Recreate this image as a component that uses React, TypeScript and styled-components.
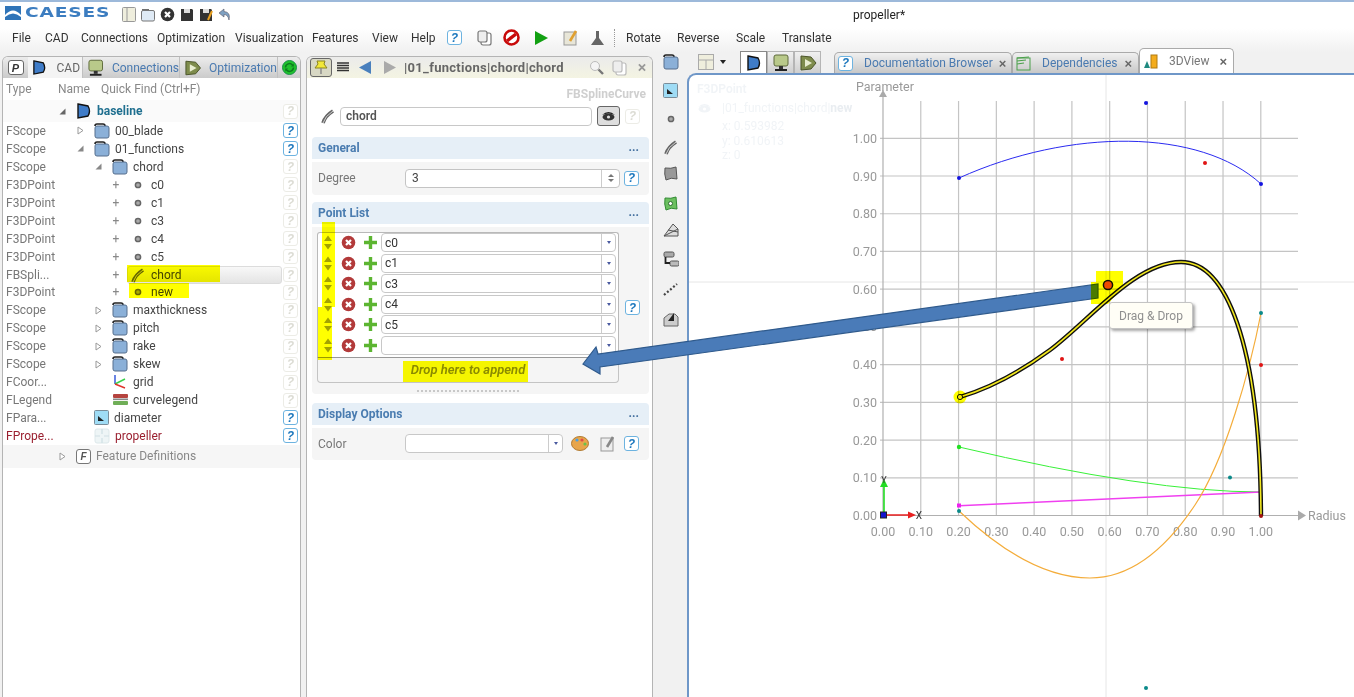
import React from 'react'
import styled, { createGlobalStyle } from 'styled-components'

const FONT = `Roboto, "Noto Sans", "DejaVu Sans", sans-serif`

const GlobalStyle = createGlobalStyle`
  html, body { margin: 0; padding: 0; background: #fff; }
  body { font-family: ${FONT}; font-size: 12px; color: #444; }
  * { box-sizing: border-box; }
`

/* ---------- icons ---------- */

const CadIcon = ({ s = 16 }: { s?: number }) => (
  <svg width={s} height={s} viewBox="0 0 16 16">
    <path d="M2 1 L12 3 Q15 8 12 13 L2 15 Z" fill="#3f7cc8" stroke="#111" strokeWidth="1.4" />
  </svg>
)
const MonitorIcon = ({ s = 18 }: { s?: number }) => (
  <svg width={s} height={s} viewBox="0 0 18 18">
    <rect x="2" y="1" width="14" height="11" rx="2" fill="#b9c98a" stroke="#5f6b3c" />
    <rect x="7" y="12" width="4" height="3" fill="#333" />
    <rect x="3" y="15" width="12" height="2" fill="#222" />
  </svg>
)
const PlayBoxIcon = ({ s = 18 }: { s?: number }) => (
  <svg width={s} height={s} viewBox="0 0 18 18">
    <path d="M2 2 L12 3 L17 9 L12 15 L2 16 Z" fill="#7e8c4c" stroke="#4b5529" />
    <path d="M6 5 L13 9 L6 13 Z" fill="#e8edd0" />
  </svg>
)
const FolderIcon = ({ s = 16 }: { s?: number }) => (
  <svg width={s} height={s} viewBox="0 0 16 16">
    <path d="M1 3 Q1 1 3 1 L9 1 Q11 1 11 3" fill="none" stroke="#222" strokeWidth="1.6" />
    <rect x="1" y="3" width="14" height="12" rx="2" fill="#8bb0d8" stroke="#566f8d" />
  </svg>
)
const PointIcon = ({ color = '#666' }: { color?: string }) => (
  <svg width="16" height="16" viewBox="0 0 16 16">
    <circle cx="8" cy="8" r="2.6" fill="#aaa" stroke={color} strokeWidth="1.5" />
  </svg>
)
const SplineIcon = ({ s = 16 }: { s?: number }) => (
  <svg width={s} height={s} viewBox="0 0 16 16">
    <path d="M3 15 Q5 8 13 3" fill="none" stroke="#666" strokeWidth="3.6" />
    <path d="M3 15 Q5 8 13 3" fill="none" stroke="#ddd" strokeWidth="0.9" />
  </svg>
)
const GridAxesIcon = () => (
  <svg width="16" height="16" viewBox="0 0 16 16">
    <path d="M3 10 L3 1" stroke="#2b50d8" strokeWidth="1.4" />
    <path d="M3 10 L13 5" stroke="#39d24a" strokeWidth="1.4" />
    <path d="M3 10 L13 14" stroke="#e0342c" strokeWidth="1.4" />
  </svg>
)
const LegendIcon = () => (
  <svg width="16" height="16" viewBox="0 0 16 16">
    <rect x="1" y="2" width="15" height="4" rx="1" fill="#b5443f" />
    <rect x="1" y="6.5" width="15" height="1.6" fill="#888" />
    <rect x="1" y="9" width="15" height="4" rx="1" fill="#6fae57" />
  </svg>
)
const ParamIcon = ({ s = 15 }: { s?: number }) => (
  <svg width={s} height={s} viewBox="0 0 15 15">
    <rect x="0.5" y="0.5" width="14" height="14" rx="1" fill="#9fdcf5" stroke="#7a8d99" />
    <path d="M4 11 L4 6 L10 11 Z" fill="#222" />
  </svg>
)
const FeatureIcon = () => (
  <svg width="16" height="16" viewBox="0 0 16 16">
    <rect x="1" y="1" width="14" height="14" rx="2" fill="#eef5f6" stroke="#dde8ea" />
    <path d="M8 1 V6 M8 10 V15 M1 8 H6 M10 8 H15" stroke="#cfe0e4" strokeWidth="1.2" />
  </svg>
)
const CloseCircleIcon = ({ fill, s = 15 }: { fill: string; s?: number }) => (
  <svg width={s} height={s} viewBox="0 0 15 15">
    <circle cx="7.5" cy="7.5" r="6.8" fill={fill} />
    <path d="M5 5 L10 10 M10 5 L5 10" stroke="#fff" strokeWidth="2.2" />
  </svg>
)
const PlusIcon = () => (
  <svg width="15" height="15" viewBox="0 0 15 15">
    <path d="M7.5 1 V14 M1 7.5 H14" stroke="#5cb531" strokeWidth="3.4" />
  </svg>
)
const UpDownIcon = () => (
  <svg width="10" height="15" viewBox="0 0 10 15">
    <path d="M5 0.5 L9 6 H1 Z M5 14.5 L9 9 H1 Z" fill="#a3a375" />
  </svg>
)
const SaveIcon = ({ pen }: { pen?: boolean }) => (
  <svg width="14" height="14" viewBox="0 0 14 14">
    <path d="M1 1 H12 L13 2 V13 H1 Z" fill="#333" />
    <rect x="4" y="1" width="6" height="4" fill="#ddd" />
    {pen && <path d="M13 3 L9 12" stroke="#e8a020" strokeWidth="2" />}
  </svg>
)
const EyeIcon = ({ faint }: { faint?: boolean }) => (
  <svg width="15" height="10" viewBox="0 0 15 10">
    <path d="M1 4 Q7.5 -2 14 4 Q7.5 1 1 4 Z" fill={faint ? '#f1f4f7' : '#222'} />
    <ellipse cx="7.5" cy="6" rx="6" ry="3.5" fill={faint ? '#f1f4f7' : '#333'} />
    <circle cx="7.5" cy="6" r="1.6" fill={faint ? '#fff' : '#ddd'} />
  </svg>
)
const NoteIcon = ({ faded }: { faded?: boolean }) => (
  <svg width="16" height="16" viewBox="0 0 16 16">
    <rect x="1" y="2" width="12" height="13" fill={faded ? '#eee' : '#e8e6d8'} stroke="#999" />
    <path d="M13 1 L7 11" stroke={faded ? '#888' : '#e0a030'} strokeWidth="2.6" />
  </svg>
)
const CopyIcon = ({ c = '#777' }: { c?: string }) => (
  <svg width="15" height="16" viewBox="0 0 15 16">
    <rect x="4" y="3" width="10" height="12" rx="2" fill="#fff" stroke={c} strokeWidth="1.2" />
    <rect x="1" y="1" width="9" height="11" rx="2" fill="#eee" stroke={c} strokeWidth="1.2" />
  </svg>
)
const SyncIcon = () => (
  <svg width="15" height="15" viewBox="0 0 15 15">
    <circle cx="7.5" cy="7.5" r="7" fill="#1fc22c" stroke="#1a8f4a" />
    <path d="M3.5 7.5 A4 4 0 0 1 10.5 5 M11.5 7.5 A4 4 0 0 1 4.5 10" fill="none" stroke="#0d7a20" strokeWidth="1.5" />
    <path d="M9 6.5 L12 6.5 L11.5 3.5 Z M6 8.5 L3 8.5 L3.5 11.5 Z" fill="#0d7a20" />
  </svg>
)

/* ---------- shared bits ---------- */

const Help = styled.span<{ $faint?: boolean }>`
  flex: none;
  display: flex;
  align-items: center;
  justify-content: center;
  width: 15px;
  height: 15px;
  border-radius: 3px;
  border: 1.5px solid ${p => (p.$faint ? '#ecece6' : '#6db3e0')};
  background: #fff;
  color: ${p => (p.$faint ? '#dcdcd4' : '#1c77bd')};
  font: italic bold 12px "Liberation Sans", sans-serif;
`

/* ---------- top bars ---------- */

const Page = styled.div`
  position: relative;
  width: 1354px;
  height: 697px;
  overflow: hidden;
  display: flex;
  flex-direction: column;
  border-top: 2px solid #9db9da;
  background: linear-gradient(#ffffff 0, #ffffff 26px, #f1f1f1 50px, #f1f1f1 100%);
  filter: blur(0.35px);
`
const TitleBar = styled.div`
  height: 25px;
  display: flex;
  align-items: center;
  padding-left: 5px;
`
const Logo = styled.div`
  display: flex;
  align-items: center;
  gap: 4px;
  width: 117px;
  margin-top: -3px;
`
const LogoText = styled.span`
  display: inline-block;
  margin-top: -3px;
  font: bold 13.5px "DejaVu Sans", sans-serif;
  letter-spacing: 0.6px;
  color: #3c7dc0;
  transform: scaleX(1.38);
  transform-origin: left center;
`
const QuickIcons = styled.div`
  display: flex;
  align-items: center;
  gap: 5px;
`
const Title = styled.div`
  margin-left: 622px;
  color: #222;
`
const MenuBar = styled.div`
  height: 21px;
  display: flex;
  align-items: center;
  padding-left: 12px;
  color: #333;
`
const MenuItem = styled.span<{ $w: number }>`
  flex: none;
  width: ${p => p.$w}px;
`
const MenuIcon = styled.span<{ $w: number }>`
  flex: none;
  display: flex;
  width: ${p => p.$w}px;
`
const DotSep = styled.span`
  flex: none;
  width: 0;
  height: 18px;
  border-left: 1px dotted #999;
  margin-right: 11px;
`

/* ---------- main ---------- */

const Main = styled.div`
  flex: 1;
  min-height: 0;
  display: flex;
  padding-left: 2px;
`
const Panel = styled.div<{ $w: number; $gap?: number }>`
  flex: none;
  width: ${p => p.$w}px;
  margin-top: 8px;
  margin-left: ${p => p.$gap ?? 0}px;
  display: flex;
  flex-direction: column;
  background: #fff;
  border: 1.5px solid #b4b4b4;
  border-bottom: none;
  border-radius: 6px 6px 0 0;
  overflow: hidden;
`

/* left panel */
const LeftTabs = styled.div`
  height: 21px;
  flex: none;
  display: flex;
  align-items: stretch;
  background: linear-gradient(#ececec, #cbcbcb);
`
const PinBox = styled.div`
  width: 25px;
  display: flex;
  align-items: center;
  justify-content: center;
`
const PKey = styled.span`
  width: 16px;
  height: 15px;
  border: 1.5px solid #666;
  border-radius: 3px;
  background: #fff;
  color: #333;
  display: flex;
  align-items: center;
  justify-content: center;
  font: italic bold 11px "Liberation Sans", sans-serif;
`
const LeftTab = styled.div<{ $w: number; $gap: number; $active?: boolean }>`
  flex: none;
  width: ${p => p.$w}px;
  display: flex;
  align-items: center;
  gap: ${p => p.$gap}px;
  padding-left: 3.5px;
  background: ${p => (p.$active ? '#f4f4f4' : 'transparent')};
  color: ${p => (p.$active ? '#666' : '#4a7ab0')};
  border-right: 1px solid #c0c0c0;
`
const Sync = styled.span`
  margin-left: 4px;
  align-self: center;
  display: flex;
`
const TreeHeader = styled.div`
  height: 22px;
  flex: none;
  display: grid;
  grid-template-columns: 52px 43px 1fr;
  align-items: center;
  color: #888;
  & > span { padding-left: 3px; }
`
const TreeBody = styled.div`
  display: flex;
  flex-direction: column;
`
const Row = styled.div<{ $h?: number; $bg?: string }>`
  height: ${p => p.$h ?? 17.95}px;
  flex: none;
  display: grid;
  grid-template-columns: 48px 1fr 15px;
  align-items: center;
  padding-right: 2px;
  background: ${p => p.$bg ?? 'transparent'};
`
const TypeCell = styled.span<{ $red?: boolean }>`
  padding-left: 3px;
  white-space: nowrap;
  color: ${p => (p.$red ? '#9a1f2f' : '#777')};
`
const TreeCell = styled.div<{ $level: number }>`
  display: flex;
  align-items: center;
  padding-left: ${p => 6 + p.$level * 18}px;
  height: 100%;
  min-width: 0;
`
const Expander = styled.span`
  flex: none;
  width: 10px;
  display: flex;
  justify-content: center;
  margin-right: 6px;
  color: #888;
`
const Node = styled.div<{ $selected?: boolean }>`
  flex: 1;
  height: 100%;
  display: flex;
  align-items: center;
  gap: 5px;
  padding-left: 3px;
  border-radius: 3px;
  margin-right: 1px;
  ${p => p.$selected && 'background: linear-gradient(#f8f8f8, #e4e4e4); border: 1px solid #dcdcdc; padding-left: 2px;'}
`
const NodeLabel = styled.span<{ $tone?: string; $bold?: boolean }>`
  color: ${p => p.$tone ?? '#444'};
  font-weight: ${p => (p.$bold ? 700 : 400)};
`
const Triangle = ({ open, dark }: { open?: boolean; dark?: boolean }) => (
  <svg width="9" height="9" viewBox="0 0 9 9">
    {open ? <path d="M7.5 1.5 V7.5 H1.5 Z" fill={dark ? '#666' : '#888'} /> : <path d="M2 1 L7 4.5 L2 8 Z" fill="#fff" stroke="#999" />}
  </svg>
)
const FKey = styled.span`
  width: 15px;
  height: 15px;
  border: 1.5px solid #777;
  border-radius: 3px;
  background: #fff;
  color: #555;
  display: flex;
  align-items: center;
  justify-content: center;
  font: italic bold 10px "Liberation Sans", sans-serif;
`

type TreeRow = {
  type: string
  label: string
  level: number
  exp?: 'closed' | 'open' | 'plus'
  icon: React.ReactNode
  help?: boolean
  red?: boolean
  selected?: boolean
}

const treeRows: TreeRow[] = [
  { type: 'FScope', label: '00_blade', level: 1, exp: 'closed', icon: <FolderIcon />, help: true },
  { type: 'FScope', label: '01_functions', level: 1, exp: 'open', icon: <FolderIcon />, help: true },
  { type: 'FScope', label: 'chord', level: 2, exp: 'open', icon: <FolderIcon /> },
  { type: 'F3DPoint', label: 'c0', level: 3, exp: 'plus', icon: <PointIcon /> },
  { type: 'F3DPoint', label: 'c1', level: 3, exp: 'plus', icon: <PointIcon /> },
  { type: 'F3DPoint', label: 'c3', level: 3, exp: 'plus', icon: <PointIcon /> },
  { type: 'F3DPoint', label: 'c4', level: 3, exp: 'plus', icon: <PointIcon /> },
  { type: 'F3DPoint', label: 'c5', level: 3, exp: 'plus', icon: <PointIcon /> },
  { type: 'FBSpli...', label: 'chord', level: 3, exp: 'plus', icon: <SplineIcon />, selected: true },
  { type: 'F3DPoint', label: 'new', level: 3, exp: 'plus', icon: <PointIcon /> },
  { type: 'FScope', label: 'maxthickness', level: 2, exp: 'closed', icon: <FolderIcon /> },
  { type: 'FScope', label: 'pitch', level: 2, exp: 'closed', icon: <FolderIcon /> },
  { type: 'FScope', label: 'rake', level: 2, exp: 'closed', icon: <FolderIcon /> },
  { type: 'FScope', label: 'skew', level: 2, exp: 'closed', icon: <FolderIcon /> },
  { type: 'FCoor...', label: 'grid', level: 2, icon: <GridAxesIcon /> },
  { type: 'FLegend', label: 'curvelegend', level: 2, icon: <LegendIcon /> },
  { type: 'FPara...', label: 'diameter', level: 1, icon: <ParamIcon />, help: true },
  { type: 'FPrope...', label: 'propeller', level: 1, icon: <FeatureIcon />, help: true, red: true },
]

const LeftPanel = () => (
  <Panel $w={299}>
    <LeftTabs>
      <PinBox><PKey>P</PKey></PinBox>
      <LeftTab $w={55} $gap={10} $active><CadIcon s={15} />CAD</LeftTab>
      <LeftTab $w={97} $gap={8}><MonitorIcon />Connections</LeftTab>
      <LeftTab $w={98} $gap={8}><PlayBoxIcon />Optimization</LeftTab>
      <Sync><SyncIcon /></Sync>
    </LeftTabs>
    <TreeHeader>
      <span>Type</span>
      <span>Name</span>
      <span>Quick Find (Ctrl+F)</span>
    </TreeHeader>
    <TreeBody>
      <Row $h={22} $bg="#fafafa">
        <TypeCell />
        <TreeCell $level={0}>
          <Expander><Triangle open dark /></Expander>
          <Node><CadIcon /><NodeLabel $tone="#1f6f8f" $bold>baseline</NodeLabel></Node>
        </TreeCell>
        <Help $faint>?</Help>
      </Row>
      {treeRows.map((r, i) => (
        <Row key={i}>
          <TypeCell $red={r.red}>{r.type}</TypeCell>
          <TreeCell $level={r.level}>
            <Expander>
              {r.exp === 'plus' ? '+' : r.exp ? <Triangle open={r.exp === 'open'} /> : null}
            </Expander>
            <Node $selected={r.selected}>
              {r.icon}
              <NodeLabel $tone={r.red ? '#9a1f2f' : undefined}>{r.label}</NodeLabel>
            </Node>
          </TreeCell>
          <Help $faint={!r.help}>?</Help>
        </Row>
      ))}
      <Row $h={23} $bg="#f6f6f6">
        <TypeCell />
        <TreeCell $level={0}>
          <Expander><Triangle /></Expander>
          <Node><FKey>F</FKey><NodeLabel $tone="#888">Feature Definitions</NodeLabel></Node>
        </TreeCell>
        <span />
      </Row>
    </TreeBody>
  </Panel>
)

/* middle panel */
const MidHeader = styled.div`
  height: 21px;
  flex: none;
  display: flex;
  align-items: center;
  padding: 0 6px 0 3px;
  background: linear-gradient(#ebebeb, #f4f4e2);
`
const PinToggle = styled.span`
  width: 22px;
  height: 19px;
  flex: none;
  display: flex;
  align-items: center;
  justify-content: center;
  border: 1.5px solid #666;
  border-radius: 3px;
  background: #d8d8c4;
  margin-right: 5px;
`
const HeadIcon = styled.span<{ $w: number; $pad?: number }>`
  flex: none;
  width: ${p => p.$w}px;
  padding-left: ${p => p.$pad ?? 0}px;
  display: flex;
`
const Crumb = styled.span`
  flex: none;
  width: 185px;
  font-size: 13px;
  font-weight: 700;
  letter-spacing: 0.3px;
  color: #666;
`
const MidBody = styled.div`
  padding: 0 3px 0 5px;
  display: flex;
  flex-direction: column;
`
const ClassName = styled.div`
  height: 27px;
  padding: 4px 3px 0 0;
  display: flex;
  align-items: center;
  justify-content: flex-end;
  font-weight: 700;
  color: #cfcfcf;
`
const NameRow = styled.div`
  height: 22px;
  display: flex;
  align-items: center;
  padding-left: 8px;
`
const NameField = styled.div`
  width: 252px;
  height: 19px;
  margin-left: 4px;
  padding-left: 5px;
  display: flex;
  align-items: center;
  border: 1px solid #c8c8c8;
  border-radius: 4px;
  background: #fff;
  font-weight: 600;
  color: #555;
`
const EyeToggle = styled.span`
  width: 23px;
  height: 20px;
  margin: 0 5px;
  display: flex;
  align-items: center;
  justify-content: center;
  border: 1.5px solid #666;
  border-radius: 3px;
  background: #dedede;
`
const GroupHead = styled.div<{ $top: number }>`
  height: 22px;
  margin-top: ${p => p.$top}px;
  padding: 0 10px 0 6px;
  flex: none;
  display: flex;
  align-items: center;
  justify-content: space-between;
  background: #e6eff7;
  border-radius: 4px 4px 0 0;
  font-weight: 700;
  color: #4a7cb0;
`
const Dots = styled.span`
  font-weight: 700;
  color: #44709f;
  line-height: 8px;
  height: 10px;
`
const GroupBody = styled.div<{ $h: number }>`
  height: ${p => p.$h}px;
  margin-top: 3px;
  padding: 0 9px 0 5px;
  background: #f5f5f5;
  border-radius: 0 0 4px 4px;
  display: flex;
`
const PropRow = styled.div`
  flex: 1;
  display: flex;
  align-items: center;
  padding-left: 1px;
  color: #777;
`
const PropLabel = styled.span`
  width: 87px;
  flex: none;
`
const SpinBox = styled.div`
  width: 215px;
  height: 19px;
  margin-right: 4px;
  padding-left: 6px;
  display: flex;
  align-items: center;
  justify-content: space-between;
  background: #fff;
  border: 1px solid #c4c4c4;
  border-radius: 4px;
  color: #444;
`
const SpinArrows = styled.span`
  width: 18px;
  height: 100%;
  border-left: 1px solid #ccc;
  display: flex;
  flex-direction: column;
  align-items: center;
  justify-content: center;
  gap: 2px;
`
const ListColumn = styled.div`
  width: 302px;
  flex: none;
  padding-top: 5px;
`
const PointBox = styled.div`
  height: 126px;
  border: 1.5px solid #b9b9b9;
  border-bottom: 1.5px solid #999;
  border-radius: 3px 3px 0 0;
  padding: 0 2px 0 0;
  background: #fff;
  display: flex;
  flex-direction: column;
`
const PointRow = styled.div`
  height: 20.5px;
  flex: none;
  display: grid;
  grid-template-columns: 20px 21px 22px 1fr;
  align-items: center;
  justify-items: center;
`
const Combo = styled.div<{ $w?: number }>`
  width: ${p => (p.$w ? `${p.$w}px` : '100%')};
  height: 19px;
  flex: none;
  justify-self: stretch;
  display: flex;
  align-items: center;
  justify-content: space-between;
  padding-left: 3px;
  background: #fff;
  border: 1px solid #c8c8c8;
  border-radius: 4px;
  color: #333;
`
const ComboArrow = styled.span`
  width: 14px;
  height: 100%;
  border-left: 1px solid #ccc;
  display: flex;
  align-items: center;
  justify-content: center;
  &::after {
    content: '';
    border-left: 2.5px solid transparent;
    border-right: 2.5px solid transparent;
    border-top: 3px solid #4a5aa0;
  }
`
const DropZone = styled.div`
  height: 25px;
  display: flex;
  align-items: center;
  justify-content: center;
  border: 1.5px solid #c4c4c4;
  border-top: none;
  border-radius: 0 0 4px 4px;
  font-size: 13px;
  font-style: italic;
  font-weight: 600;
  color: #8a8a8a;
`
const GripRow = styled.div`
  height: 7px;
  margin: 2px 100px 0;
  border-bottom: 2px dotted #c8c8c8;
`
const HelpSide = styled.div`
  flex: 1;
  display: flex;
  justify-content: flex-end;
  align-items: center;
  padding-bottom: 5px;
`
const SpinUp = styled.i`
  border-left: 3px solid transparent;
  border-right: 3px solid transparent;
  border-bottom: 3px solid #777;
`
const SpinDown = styled.i`
  border-left: 3px solid transparent;
  border-right: 3px solid transparent;
  border-top: 3px solid #777;
`

const PointList = ['c0', 'c1', 'c3', 'c4', 'c5', '']

const Arrow = ({ d, c }: { d: string; c: string }) => (
  <svg width="13" height="13" viewBox="0 0 13 13"><path d={d} fill={c} /></svg>
)

const MiddlePanel = () => (
  <Panel $w={347} $gap={5}>
    <MidHeader>
      <PinToggle>
        <svg width="14" height="15" viewBox="0 0 14 15">
          <path d="M3 1 H11 L10 4 L13 8 H1 L4 4 Z" fill="#f2e838" stroke="#8a8420" />
          <path d="M7 8 V14" stroke="#888" strokeWidth="1.4" />
        </svg>
      </PinToggle>
      <HeadIcon $w={22}>
        <svg width="12" height="11" viewBox="0 0 12 11"><path d="M0 1 H12 M0 3.5 H12 M0 6 H12 M0 8.5 H12" stroke="#333" strokeWidth="1.3" /></svg>
      </HeadIcon>
      <HeadIcon $w={24}><Arrow d="M12 0 V13 L0 6.5 Z" c="#4a80bd" /></HeadIcon>
      <HeadIcon $w={21}><Arrow d="M1 0 V13 L13 6.5 Z" c="#aaa" /></HeadIcon>
      <Crumb>|01_functions|chord|chord</Crumb>
      <HeadIcon $w={23}>
        <svg width="15" height="15" viewBox="0 0 15 15">
          <circle cx="6" cy="6" r="4.5" fill="#f4f4f4" stroke="#bbb" />
          <path d="M9.5 9.5 L14 14" stroke="#777" strokeWidth="2.4" />
        </svg>
      </HeadIcon>
      <HeadIcon $w={26}><CopyIcon c="#bbb" /></HeadIcon>
      <svg width="9" height="9" viewBox="0 0 9 9"><path d="M1 1 L8 8 M8 1 L1 8" stroke="#999" strokeWidth="2" /></svg>
    </MidHeader>
    <MidBody>
      <ClassName>FBSplineCurve</ClassName>
      <NameRow>
        <SplineIcon />
        <NameField>chord</NameField>
        <EyeToggle><EyeIcon /></EyeToggle>
        <Help $faint>?</Help>
      </NameRow>
      <GroupHead $top={9.5}>General<Dots>...</Dots></GroupHead>
      <GroupBody $h={33}>
        <PropRow>
          <PropLabel>Degree</PropLabel>
          <SpinBox>3<SpinArrows><SpinUp /><SpinDown /></SpinArrows></SpinBox>
          <Help>?</Help>
        </PropRow>
      </GroupBody>
      <GroupHead $top={7}>Point List<Dots>...</Dots></GroupHead>
      <GroupBody $h={167}>
        <ListColumn>
          <PointBox>
            {PointList.map((p, i) => (
              <PointRow key={i}>
                <UpDownIcon />
                <CloseCircleIcon fill="#b23a3a" />
                <PlusIcon />
                <Combo><span>{p}</span><ComboArrow /></Combo>
              </PointRow>
            ))}
          </PointBox>
          <DropZone>Drop here to append</DropZone>
          <GripRow />
        </ListColumn>
        <HelpSide><Help>?</Help></HelpSide>
      </GroupBody>
      <GroupHead $top={9}>Display Options<Dots>...</Dots></GroupHead>
      <GroupBody $h={32}>
        <PropRow>
          <PropLabel>Color</PropLabel>
          <Combo $w={158}><span /><ComboArrow /></Combo>
          <HeadIcon $w={37} $pad={8}>
            <svg width="18" height="15" viewBox="0 0 18 15">
              <ellipse cx="9" cy="7.5" rx="8.5" ry="7" fill="#e8a54a" stroke="#b07a30" />
              <circle cx="6" cy="4" r="1.6" fill="#4aa0e0" />
              <circle cx="11" cy="4" r="1.6" fill="#e04a4a" />
              <circle cx="14" cy="8" r="1.6" fill="#6bc04a" />
            </svg>
          </HeadIcon>
          <HeadIcon $w={24}><NoteIcon faded /></HeadIcon>
          <Help>?</Help>
        </PropRow>
      </GroupBody>
    </MidBody>
  </Panel>
)

/* tools column */
const ToolColumn = styled.div`
  flex: none;
  width: 34px;
  padding: 6px 0 0 1px;
  display: flex;
  flex-direction: column;
  align-items: center;
`
const ToolSlot = styled.div<{ $mt: number }>`
  height: 16px;
  margin-top: ${p => p.$mt}px;
  flex: none;
  display: flex;
  align-items: center;
  justify-content: center;
`
const ToolColumnView = () => (
  <ToolColumn>
    <ToolSlot $mt={0}><FolderIcon /></ToolSlot>
    <ToolSlot $mt={12}><ParamIcon /></ToolSlot>
    <ToolSlot $mt={13}><PointIcon /></ToolSlot>
    <ToolSlot $mt={12}><SplineIcon /></ToolSlot>
    <ToolSlot $mt={10}>
      <svg width="15" height="15" viewBox="0 0 15 15"><path d="M2 2 Q8 3 13 1 L14 13 Q8 11 3 14 Q1 8 2 2 Z" fill="#999" stroke="#555" /></svg>
    </ToolSlot>
    <ToolSlot $mt={14}>
      <svg width="15" height="15" viewBox="0 0 15 15">
        <path d="M2 2 Q8 3 13 1 L14 13 Q8 11 3 14 Q1 8 2 2 Z" fill="#6cc060" stroke="#2f8a30" />
        <circle cx="7.5" cy="7.5" r="2" fill="#fff" stroke="#2f6a30" />
      </svg>
    </ToolSlot>
    <ToolSlot $mt={11}>
      <svg width="16" height="14" viewBox="0 0 16 14">
        <path d="M1 13 L10 1 L15 6 V13 Z M1 13 L15 6 M5 7 L15 9" fill="#ddd" stroke="#555" />
      </svg>
    </ToolSlot>
    <ToolSlot $mt={13}>
      <svg width="16" height="16" viewBox="0 0 16 16">
        <rect x="1" y="1" width="10" height="5" rx="1.5" fill="#aaa" stroke="#555" />
        <rect x="7" y="10" width="9" height="5" rx="1.5" fill="#bbb" stroke="#555" />
        <path d="M2.5 6 V12 H7" fill="none" stroke="#222" strokeWidth="1.8" />
      </svg>
    </ToolSlot>
    <ToolSlot $mt={14}>
      <svg width="15" height="13" viewBox="0 0 15 13">
        <path d="M1 12 L14 1" stroke="#444" strokeWidth="2.2" strokeDasharray="2 2" />
      </svg>
    </ToolSlot>
    <ToolSlot $mt={14}>
      <svg width="16" height="15" viewBox="0 0 16 15">
        <path d="M1 6 L6 2 H12 L15 5 V14 H1 Z" fill="#ccc" stroke="#666" />
        <path d="M5 9 L11 1 L11 9 Z" fill="#222" />
      </svg>
    </ToolSlot>
  </ToolColumn>
)

/* view column */
const ViewColumn = styled.div`
  flex: 1;
  min-width: 0;
  display: flex;
  flex-direction: column;
`
const TabStrip = styled.div`
  height: 25px;
  flex: none;
  display: flex;
  align-items: flex-end;
  padding-left: 11px;
`
const LayoutPick = styled.div`
  width: 42px;
  height: 23px;
  flex: none;
  display: flex;
  align-items: center;
  gap: 6px;
`
const Caret = styled.i`
  border-left: 3.5px solid transparent;
  border-right: 3.5px solid transparent;
  border-top: 4px solid #222;
`
const ModeButton = styled.div<{ $active?: boolean }>`
  width: 27px;
  height: 22px;
  flex: none;
  display: flex;
  align-items: center;
  justify-content: center;
  border: 1px solid ${p => (p.$active ? '#888' : '#b5b5b5')};
  border-bottom: none;
  background: ${p => (p.$active ? '#fff' : 'linear-gradient(#f0f0f0, #cfcfcf)')};
`
const DocTab = styled.div<{ $w: number; $active?: boolean; $gap?: number }>`
  width: ${p => p.$w}px;
  height: ${p => (p.$active ? 25 : 21)}px;
  flex: none;
  display: flex;
  align-items: center;
  padding: 0 5px 0 3px;
  gap: 6px;
  margin-left: ${p => p.$gap ?? 0}px;
  border: 1px solid #aaa;
  border-bottom: none;
  border-radius: 5px 5px 0 0;
  background: ${p => (p.$active ? '#fff' : 'linear-gradient(#f0f0f0, #c8c8c8)')};
  color: ${p => (p.$active ? '#777' : '#4a7ab0')};
`
const TabLabel = styled.span`
  flex: 1;
  padding-left: 5px;
  white-space: nowrap;
`
const TabClose = styled.span`
  color: #666;
  font: bold 13px "Liberation Sans", sans-serif;
  padding-right: 1px;
`
const ViewPanel = styled.div`
  flex: 1;
  min-height: 0;
  position: relative;
  background: #fff;
  border-top: 2px solid #6f97c8;
  border-left: 2px solid #6f97c8;
  border-radius: 9px 0 0 0;
  overflow: hidden;
`
const ChartSvg = styled.svg`
  display: block;
  width: 665px;
  height: 622px;
`
const Inspect = styled.div`
  position: absolute;
  left: 8px;
  top: 7px;
  color: #f1f4f7;
  line-height: 14.5px;
`
const InspectTitle = styled.div`
  margin-bottom: 4px;
  font-weight: 600;
`
const InspectHead = styled.div`
  display: flex;
  align-items: center;
  gap: 10px;
  margin-bottom: 4px;
  & > span > b { font-weight: 700; color: #e9edf1; }
`
const InspectLine = styled.div`
  padding-left: 25px;
`
const Tooltip = styled.div`
  position: absolute;
  left: 420px;
  top: 227px;
  width: 84px;
  height: 27px;
  display: flex;
  align-items: center;
  justify-content: center;
  background: #fffef6;
  border: 1px solid #c4c4c4;
  border-radius: 3px;
  box-shadow: 2px 2px 3px rgba(0, 0, 0, 0.35);
  color: #8f8f8f;
`
const OverlayArrow = styled.svg`
  position: absolute;
  left: 0;
  top: -2px;
  width: 1354px;
  height: 697px;
  pointer-events: none;
`
const OverlayMarker = styled(OverlayArrow)`
  mix-blend-mode: multiply;
`

const X0 = 883
const Y0 = 515.5
const DX = 37.78
const DY = 37.72
const ticks = [0, 1, 2, 3, 4, 5, 6, 7, 8, 9, 10]
const MAIN_CURVE = 'M960 397 C990 388 1020 372 1050 350 C1090 320 1135 262 1181 262 C1225 262 1260 340 1261 516'

const Chart = () => (
  <ChartSvg viewBox="689 75 665 622" fontFamily={FONT} fontSize="12.5" fill="#999">
    {/* crosshair */}
    <path d="M1106 73 V697 M687 282 H1354" stroke="#e6e6e6" />
    {/* grid */}
    {ticks.slice(1).map(i => (
      <path key={i} d={`M${X0 + i * DX} 101 V${Y0}`} stroke="#c4c4c4" strokeWidth="1.2" />
    ))}
    {ticks.slice(1).map(i => (
      <path key={i} d={`M880 ${Y0 - i * DY} H1298`} stroke="#c4c4c4" strokeWidth="1.2" />
    ))}
    {/* axes */}
    <path d={`M${X0} 96 V${Y0} M880 ${Y0} H1300`} stroke="#b0b0b0" strokeWidth="1.2" />
    <path d="M879 97 L883 90 L887 97 Z M1298 510.5 L1306 515.5 L1298 520.5 Z" fill="#aaa" />
    <text x="856" y="91">Parameter</text>
    <text x="1308" y="520">Radius</text>
    {ticks.map(i => (
      <text key={i} x={X0 + i * DX} y="535.5" textAnchor="middle">{(i / 10).toFixed(2)}</text>
    ))}
    {ticks.map(i => (
      <text key={i} x="877" y={Y0 - i * DY + 4.5} textAnchor="end">{(i / 10).toFixed(2)}</text>
    ))}
    {/* curves */}
    <path d="M959 178 C1070 128 1200 128 1261 184" fill="none" stroke="#2a2af0" />
    <path d="M959 447 Q1150 492 1261 492" fill="none" stroke="#38f038" />
    <path d="M959 505.7 L1261 492" fill="none" stroke="#f040f0" strokeWidth="1.4" />
    <path d="M959 511 C1000 550 1045 578 1090 578 C1140 578 1175 535 1195 505 C1225 460 1250 370 1261 313" fill="none" stroke="#f4ad3c" strokeWidth="1.2" />
    <path d={MAIN_CURVE} fill="none" stroke="#111" strokeWidth="4.4" />
    <path d={MAIN_CURVE} fill="none" stroke="#f2e81e" strokeWidth="1.6" />
    {/* points */}
    {[[959, 178], [1146, 103], [1261, 184]].map(([x, y], i) => <circle key={i} cx={x} cy={y} r="2" fill="#1414e0" />)}
    {[[1205, 163], [1062, 359], [1261, 365]].map(([x, y], i) => <circle key={i} cx={x} cy={y} r="2" fill="#e01414" />)}
    {[[1146, 688], [1230, 477.5], [959, 511], [1261, 313]].map(([x, y], i) => <circle key={i} cx={x} cy={y} r="2" fill="#0a8a8a" />)}
    <circle cx="959" cy="447" r="2.2" fill="#22e022" />
    <rect x="957" y="503.5" width="4" height="4" fill="#f020f0" />
    <circle cx="1261" cy="516" r="2" fill="#a01010" />
    <circle cx="960" cy="397" r="2.6" fill="#f2e81e" stroke="#111" />
    {/* origin axes */}
    <path d="M884 515 V484" stroke="#22dd22" strokeWidth="1.6" />
    <path d="M880 487 L884 479 L888 487 Z" fill="#22dd22" />
    <path d="M884 515 H912" stroke="#e82020" strokeWidth="1.6" />
    <path d="M908 511.5 L916 515 L908 518.5 Z" fill="#e82020" />
    <rect x="880.5" y="512" width="6" height="6" fill="#1414d0" stroke="#222" />
    <text x="884" y="483" textAnchor="middle" fontSize="9" fill="#333">Y</text>
    <text x="919" y="519" textAnchor="middle" fontSize="10" fill="#333">X</text>
    {/* dragged point */}
    <circle cx="1108" cy="285" r="4.6" fill="#f04a10" stroke="#111" strokeWidth="1.5" />
  </ChartSvg>
)

export default function App() {
  return (
    <>
      <GlobalStyle />
      <Page>
        <TitleBar>
          <Logo>
            <svg width="16" height="14" viewBox="0 0 16 14">
              <rect width="16" height="14" fill="#2f74b8" />
              <path d="M0 9 Q8 0 16 9 L16 11 Q8 4 0 11 Z" fill="#fff" />
            </svg>
            <LogoText>CAESES</LogoText>
          </Logo>
          <QuickIcons>
            <svg width="14" height="15" viewBox="0 0 14 15"><rect x="0.5" y="0.5" width="13" height="14" rx="1" fill="#efeedd" stroke="#999" /><path d="M5 0.5 V14.5" stroke="#999" /></svg>
            <svg width="14" height="15" viewBox="0 0 14 15"><path d="M1 3 H8" stroke="#333" strokeWidth="1.4" /><rect x="0.5" y="3.5" width="13" height="10.5" rx="1.5" fill="#dfeaf5" stroke="#777" /></svg>
            <CloseCircleIcon fill="#333" />
            <SaveIcon />
            <SaveIcon pen />
            <svg width="13" height="13" viewBox="0 0 13 13"><path d="M6 1 L1 5 L6 9 V6.5 Q10 6.5 11 12 Q13 4 6 3.5 Z" fill="#7fa1c2" stroke="#556" strokeWidth="0.6" /></svg>
          </QuickIcons>
          <Title>propeller*</Title>
        </TitleBar>
        <MenuBar>
          <MenuItem $w={33}>File</MenuItem>
          <MenuItem $w={36}>CAD</MenuItem>
          <MenuItem $w={76}>Connections</MenuItem>
          <MenuItem $w={78}>Optimization</MenuItem>
          <MenuItem $w={77}>Visualization</MenuItem>
          <MenuItem $w={60}>Features</MenuItem>
          <MenuItem $w={39}>View</MenuItem>
          <MenuItem $w={36}>Help</MenuItem>
          <MenuIcon $w={30}><Help>?</Help></MenuIcon>
          <MenuIcon $w={26}><CopyIcon /></MenuIcon>
          <MenuIcon $w={32}>
            <svg width="17" height="17" viewBox="0 0 17 17">
              <circle cx="8.5" cy="8.5" r="7" fill="#fff" stroke="#c80a0a" strokeWidth="2.6" />
              <path d="M4 12 L13 5" stroke="#c80a0a" strokeWidth="3.4" />
            </svg>
          </MenuIcon>
          <MenuIcon $w={28}><svg width="13" height="14" viewBox="0 0 13 14"><path d="M0 0 L13 7 L0 14 Z" fill="#12a012" /></svg></MenuIcon>
          <MenuIcon $w={27}><NoteIcon /></MenuIcon>
          <MenuIcon $w={24}>
            <svg width="15" height="16" viewBox="0 0 15 16"><path d="M6 1 H9 V8 L14 15 H1 L6 8 Z" fill="#666" /></svg>
          </MenuIcon>
          <DotSep />
          <MenuItem $w={51}>Rotate</MenuItem>
          <MenuItem $w={59}>Reverse</MenuItem>
          <MenuItem $w={46}>Scale</MenuItem>
          <MenuItem $w={60}>Translate</MenuItem>
        </MenuBar>
        <Main>
          <LeftPanel />
          <MiddlePanel />
          <ToolColumnView />
          <ViewColumn>
            <TabStrip>
              <LayoutPick>
                <svg width="16" height="16" viewBox="0 0 16 16">
                  <rect x="0.5" y="0.5" width="15" height="15" fill="#efeedd" stroke="#aaa" />
                  <path d="M0.5 6 H15.5 M8 6 V15.5" stroke="#aaa" />
                </svg>
                <Caret />
              </LayoutPick>
              <ModeButton $active><CadIcon /></ModeButton>
              <ModeButton><MonitorIcon /></ModeButton>
              <ModeButton><PlayBoxIcon /></ModeButton>
              <DocTab $w={178} $gap={13}>
                <Help>?</Help>
                <TabLabel>Documentation Browser</TabLabel>
                <TabClose>×</TabClose>
              </DocTab>
              <DocTab $w={127}>
                <svg width="15" height="15" viewBox="0 0 15 15">
                  <path d="M1 2 L13 1 M1 5 L10 4 M1 8 L8 7" stroke="#4aa04a" strokeWidth="1.2" />
                  <rect x="1" y="2" width="13" height="12" fill="none" stroke="#4aa04a" />
                </svg>
                <TabLabel>Dependencies</TabLabel>
                <TabClose>×</TabClose>
              </DocTab>
              <DocTab $w={95} $active>
                <svg width="15" height="15" viewBox="0 0 15 15">
                  <path d="M1 14 L4 7 L7 14 Z" fill="#1f8a80" />
                  <rect x="8" y="1" width="6" height="13" fill="#f4ac1c" stroke="#b07a10" />
                </svg>
                <TabLabel>3DView</TabLabel>
                <TabClose>×</TabClose>
              </DocTab>
            </TabStrip>
            <ViewPanel>
              <Chart />
              <Inspect>
                <InspectTitle>F3DPoint</InspectTitle>
                <InspectHead>
                  <EyeIcon faint />
                  <span>|01_functions|chord|<b>new</b></span>
                </InspectHead>
                <InspectLine>x: 0.593982</InspectLine>
                <InspectLine>y: 0.610613</InspectLine>
                <InspectLine>z: 0</InspectLine>
              </Inspect>
              <Tooltip>Drag &amp; Drop</Tooltip>
            </ViewPanel>
          </ViewColumn>
        </Main>
        <OverlayArrow viewBox="0 0 1354 697">
          <path d="M1098 284 L1098 298 L600 367 L600 374 L583 364 L596 347 L598 354 Z" fill="#4a7bb8" stroke="#2f5a8c" strokeWidth="1.2" />
        </OverlayArrow>
        <OverlayMarker viewBox="0 0 1354 697">
          <g fill="#ffff00">
            <path d="M127 265 H220 V282 H127 Z" />
            <path d="M129 283 H189 V298 H129 Z" />
            <path d="M322 222 H335 V307 H332 V360 H318 V307 H322 Z" />
            <path d="M403 361 H528 V382 H403 Z" />
            <path d="M1096 271 H1123 V286 L1108 304 H1091 V282 H1096 Z" />
            <circle cx="960" cy="397" r="6.5" />
          </g>
        </OverlayMarker>
      </Page>
    </>
  )
}
